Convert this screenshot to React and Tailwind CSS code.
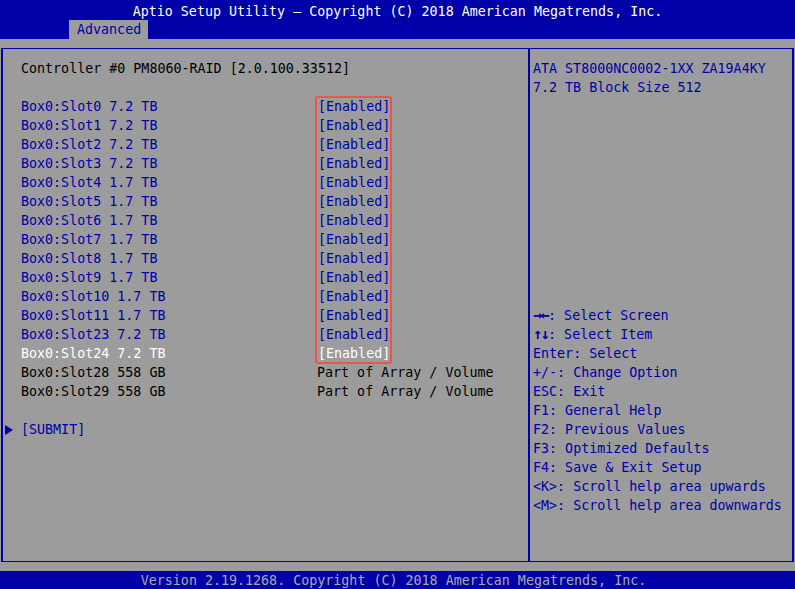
import React from 'react';

const slots = [
  { label: 'Box0:Slot0 7.2 TB', value: '[Enabled]' },
  { label: 'Box0:Slot1 7.2 TB', value: '[Enabled]' },
  { label: 'Box0:Slot2 7.2 TB', value: '[Enabled]' },
  { label: 'Box0:Slot3 7.2 TB', value: '[Enabled]' },
  { label: 'Box0:Slot4 1.7 TB', value: '[Enabled]' },
  { label: 'Box0:Slot5 1.7 TB', value: '[Enabled]' },
  { label: 'Box0:Slot6 1.7 TB', value: '[Enabled]' },
  { label: 'Box0:Slot7 1.7 TB', value: '[Enabled]' },
  { label: 'Box0:Slot8 1.7 TB', value: '[Enabled]' },
  { label: 'Box0:Slot9 1.7 TB', value: '[Enabled]' },
  { label: 'Box0:Slot10 1.7 TB', value: '[Enabled]' },
  { label: 'Box0:Slot11 1.7 TB', value: '[Enabled]' },
  { label: 'Box0:Slot23 7.2 TB', value: '[Enabled]' },
  { label: 'Box0:Slot24 7.2 TB', value: '[Enabled]', selected: true },
  { label: 'Box0:Slot28 558 GB', value: 'Part of Array / Volume', locked: true },
  { label: 'Box0:Slot29 558 GB', value: 'Part of Array / Volume', locked: true },
];

const helpLines = [
  { key: '→←', text: ': Select Screen', bold: true },
  { key: '↑↓', text: ': Select Item', bold: true },
  { key: 'Enter', text: ': Select' },
  { key: '+/-', text: ': Change Option' },
  { key: 'ESC', text: ': Exit' },
  { key: 'F1', text: ': General Help' },
  { key: 'F2', text: ': Previous Values' },
  { key: 'F3', text: ': Optimized Defaults' },
  { key: 'F4', text: ': Save & Exit Setup' },
  { key: '<K>', text: ': Scroll help area upwards' },
  { key: '<M>', text: ': Scroll help area downwards' },
];

const mono = { fontFamily: '"DejaVu Sans Mono", "Liberation Mono", monospace' };

export default function App() {
  return (
    <div
      className="w-[795px] h-[589px] flex flex-col bg-[#9c9c9c] text-[13.33px] leading-[19px] whitespace-pre overflow-hidden"
      style={mono}
    >
      {/* Title bar */}
      <div className="h-[39px] bg-[#0000a8] flex flex-col">
        <div className="h-[20px] pt-[2px] text-center text-white">
          Aptio Setup Utility – Copyright (C) 2018 American Megatrends, Inc.
        </div>
        <div className="flex pl-[69px]">
          <div className="h-[19px] w-[79px] bg-[#9c9c9c] text-[#0000a8] pl-[8px] pt-[1px] leading-[18px]">Advanced</div>
        </div>
      </div>

      {/* Main area */}
      <div className="flex-1 pt-[9px] pb-[9px] px-[1px] flex">
        <div className="flex-1 flex border-y border-x-2 border-[#0000a8]">
          {/* Left panel */}
          <div className="w-[527px] pt-[10px] pl-[18px] border-r-2 border-[#0000a8]">
            <div className="text-black">Controller #0 PM8060-RAID [2.0.100.33512]</div>
            <div className="h-[19px]" />
            <div className="relative">
              <div className="absolute left-[294px] top-[-1px] w-[77px] h-[268px] border-2 border-[#e8574a] rounded-[3px]" />
              {slots.map((s, i) => {
                const color = s.selected ? 'text-white' : s.locked ? 'text-black' : 'text-[#0000a8]';
                return (
                  <div key={i} className={`flex ${color}`}>
                    <div className="w-[297px]">{s.label}</div>
                    <div className={s.locked ? '-ml-[1px]' : ''}>{s.value}</div>
                  </div>
                );
              })}
            </div>
            <div className="h-[19px]" />
            <div className="flex items-center -ml-[16px] text-[#0000a8]">
              <svg width="8" height="10" viewBox="0 0 8 10" className="mr-[8px]">
                <path d="M0 0 L8 5 L0 10 Z" fill="#0000a8" />
              </svg>
              <span>[SUBMIT]</span>
            </div>
          </div>

          {/* Right panel */}
          <div className="flex-1 pt-[10px] pl-[3px] text-[#0000a8]">
            <div>ATA ST8000NC0002-1XX ZA19A4KY</div>
            <div>7.2 TB Block Size 512</div>
            <div className="h-[209px]" />
            {helpLines.map((line, i) => (
              <div key={i}>
                <span className={line.bold ? 'font-bold text-[15px] tracking-[-1.5px]' : ''}>{line.key}</span>
                {line.text}
              </div>
            ))}
          </div>
        </div>
      </div>

      {/* Footer */}
      <div className="h-[18px] bg-[#0000a8] text-center text-[#a8a8a8] leading-[18px] pt-[1px] pr-[8px]">
        Version 2.19.1268. Copyright (C) 2018 American Megatrends, Inc.
      </div>
    </div>
  );
}
